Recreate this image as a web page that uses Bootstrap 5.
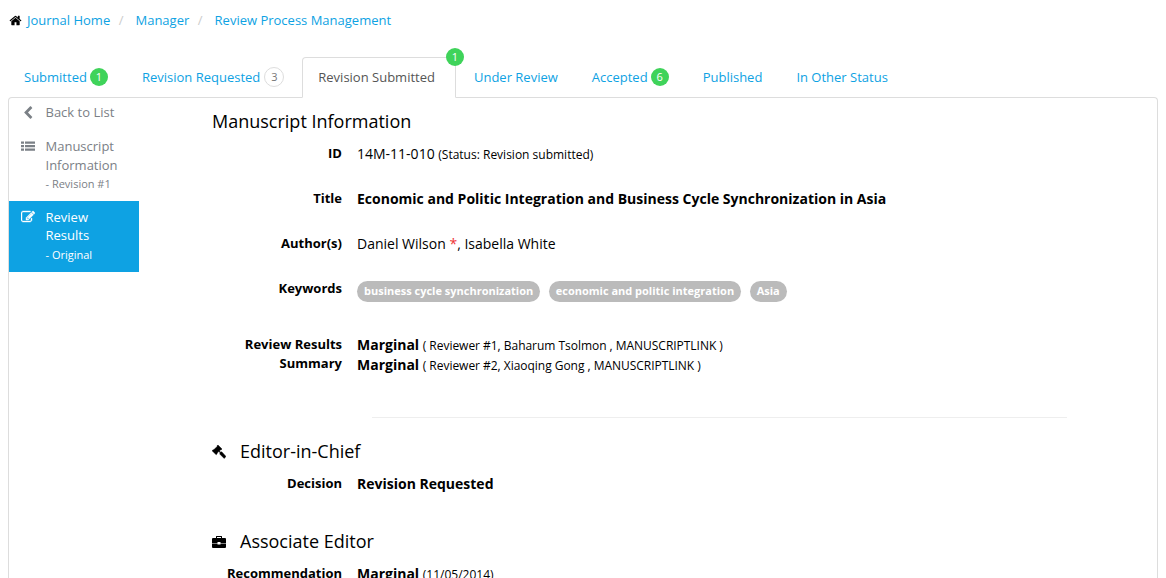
<!DOCTYPE html>
<html lang="en">
<head>
<meta charset="utf-8">
<meta name="viewport" content="width=device-width, initial-scale=1">
<title>Review Process Management</title>
<link href="https://cdn.jsdelivr.net/npm/bootstrap@5.3.0/dist/css/bootstrap.min.css" rel="stylesheet">
<style>
:root{--brand:#0ea2e3;--line:#ddd}
body{font-family:"Open Sans",sans-serif;font-size:14px;line-height:20px;color:#000;background:#fff}
a{color:var(--brand);text-decoration:none}
.fa-ico{width:14px;height:14px;fill:currentColor;flex:none;display:block}
.crumbs{font-size:13px;line-height:20px;padding:10px 0 0 1px;height:57px;margin:0}
.crumbs .fa-ico{width:13px;height:13px;margin:4px 5px 0 0}
.crumbs .breadcrumb-item+.breadcrumb-item{padding-left:8.5px}
.crumbs .breadcrumb-item+.breadcrumb-item::before{color:#ccc;padding-right:12px}
.status-tabs{font-size:13px;border:0;height:41px;position:relative;z-index:1;gap:2px;flex:none}
.status-tabs .nav-link{height:41px;padding:0 15px 2px;border-radius:4px 4px 0 0;border:1px solid transparent;margin:0;color:var(--brand);display:flex;align-items:center;white-space:pre}
.status-tabs .nav-link.active{color:#555;border-color:var(--line) var(--line) #fff;background:#fff;padding-right:20px}
.count{width:18px;height:18px;border-radius:50%;background:#3fd35a;color:#fff;font-size:11px;line-height:18px;text-align:center;margin-left:3px}
.count-plain{width:20px;height:20px;background:#fff;border:1px solid #ddd;color:#777;margin-left:4px}
.count-top{position:absolute;right:-8px;top:-9px;margin:0}
.panel-box{border:1px solid var(--line);border-bottom:0;border-radius:4px 4px 0 0;margin-top:-1px;min-height:0}
.side{width:130px;font-size:13px;color:#7b8086;line-height:18.5px;flex:none}
.side a{color:inherit;display:flex;padding:5px 12px 10px}
.side a .fa-ico{margin:3px 10.5px 0 0}
.side small{font-size:11px;display:block;line-height:19px}
.side a.tall{line-height:19px;padding-bottom:8px}
.side a.tall small{line-height:18px}
.side a.on{background:var(--brand);color:#fff;padding-top:7px;padding-bottom:8px}
.side a.on .fa-ico{margin-top:2px}
.main-col{padding:12px 90px 0 73px}
.sec-title{font-size:18px;line-height:22px;font-weight:400;margin:0 0 12px;display:flex;align-items:center}
.sec-title .fa-ico{margin:1px 14.5px 0 -.5px}
.field{display:flex;height:45px}
.field.gap-after{height:56px}
.field dt{width:130px;margin-right:15px;flex:none;text-align:right;font-size:13px;line-height:19px;font-weight:700}
.field dd{margin:0}
.field small{font-size:12px;line-height:1}
.keywords{gap:8.5px;padding-top:2px;align-self:flex-start}
.keyword{background:#bbb;border-radius:11px;font-size:11px;line-height:11px;padding:4px 7px 6px;font-weight:700}
.summary-row{height:82px}
.summary-row small{letter-spacing:-.03px}
.rule{border-top:1px solid #eee;margin:0 0 22px 160px}
.req{color:#e33}
</style>
</head>
<body>
<svg class="d-none">
<symbol id="home" viewBox="0 0 1792 1792"><path d="M1472 992v480q0 26-19 45t-45 19h-384v-384h-256v384h-384q-26 0-45-19t-19-45v-480q0-1 .5-3t.5-3l575-474 575 474q1 2 1 6zm223-69l-62 74q-8 9-21 11h-3q-13 0-21-7l-692-577-692 577q-12 8-24 7-13-2-21-11l-62-74q-8-10-7-23.5t11-21.5l719-599q32-26 76-26t76 26l244 204v-195q0-14 9-23t23-9h192q14 0 23 9t9 23v408l219 182q10 8 11 21.5t-7 23.5z"/></symbol>
<symbol id="back" viewBox="0 0 1792 1792"><path d="M1427 301l-531 531 531 531q19 19 19 45t-19 45l-166 166q-19 19-45 19t-45-19l-742-742q-19-19-19-45t19-45l742-742q19-19 45-19t45 19l166 166q19 19 19 45t-19 45z"/></symbol>
<symbol id="list" viewBox="0 0 14 14"><path d="M0 1.500h3v2.200H0zM0 5h3v2.200H0zM0 8.500h3v2.200H0zM4 1.500H14v2.200H4zM4 5H14v2.200H4zM4 8.500H14v2.200H4z"/></symbol>
<symbol id="edit" viewBox="0 0 1792 1792"><path stroke="currentColor" stroke-width="50" d="M888 1184l116-116-152-152-116 116v56h96v96h56zm440-720q-16-16-33 1l-350 350q-17 17-1 33t33-1l350-350q17-17 1-33zm80 594v190q0 119-84.500 203.500t-203.500 84.500h-832q-119 0-203.500-84.500t-84.500-203.500v-832q0-119 84.500-203.500t203.500-84.500h832q63 0 117 25 15 7 18 23 3 17-9 29l-49 49q-14 14-32 8-23-6-45-6h-832q-66 0-113 47t-47 113v832q0 66 47 113t113 47h832q66 0 113-47t47-113v-126q0-13 9-22l64-64q15-15 35-7t20 29zm-96-738l288 288-672 672h-288v-288zm444 132l-92 92-288-288 92-92q28-28 68-28t68 28l152 152q28 28 28 68t-28 68z"/></symbol>
<symbol id="gavel" viewBox="0 0 14 14"><path stroke="currentColor" stroke-width=".4" d="M6 0l4 4-1 1-.6-.2L7.500 6l1.300 1.200.9-.5L14 11.400 12.200 13.500 7.700 9l.4-1.200L6.800 6.600 5 8.200l.2.600-1 1L0 5.700l1-1 .7.100 3.500-3.400L5 .8z"/></symbol>
<symbol id="case" viewBox="0 0 14 14"><path fill-rule="evenodd" d="M4 3V1.500Q4 1 4.500 1h5q.5 0 .5.500V3h3q1 0 1 1v4H8.500V7h-3v1H0V4q0-1 1-1zm1 0h4V2H5zM0 8.500h5.500v.9h3v-.9H14V12q0 1-1 1H1q-1 0-1-1z"/></symbol>
</svg>
<div class="d-flex flex-column vh-100 overflow-hidden px-2">
  <nav><ol class="breadcrumb crumbs">
    <li class="breadcrumb-item d-flex"><svg class="fa-ico"><use href="#home"/></svg><a href="#">Journal Home</a></li>
    <li class="breadcrumb-item"><a href="#">Manager</a></li>
    <li class="breadcrumb-item"><a href="#">Review Process Management</a></li>
  </ol></nav>
  <ul class="nav nav-tabs status-tabs">
    <li class="nav-item"><a class="nav-link" href="#">Submitted<span class="count">1</span></a></li>
    <li class="nav-item"><a class="nav-link" href="#">Revision Requested<span class="count count-plain">3</span></a></li>
    <li class="nav-item position-relative"><a class="nav-link active" href="#">Revision Submitted<span class="count count-top">1</span></a></li>
    <li class="nav-item"><a class="nav-link" href="#">Under Review</a></li>
    <li class="nav-item"><a class="nav-link" href="#">Accepted<span class="count">6</span></a></li>
    <li class="nav-item"><a class="nav-link" href="#">Published</a></li>
    <li class="nav-item"><a class="nav-link" href="#">In Other Status</a></li>
  </ul>
  <div class="panel-box d-flex flex-grow-1 overflow-hidden">
    <aside class="side">
      <a href="#"><svg class="fa-ico"><use href="#back"/></svg><span>Back to List</span></a>
      <a class="tall" href="#"><svg class="fa-ico"><use href="#list"/></svg><span>Manuscript Information<small>- Revision #1</small></span></a>
      <a class="on" href="#"><svg class="fa-ico"><use href="#edit"/></svg><span>Review Results<small>- Original</small></span></a>
    </aside>
    <main class="main-col flex-grow-1">
      <h1 class="sec-title">Manuscript Information</h1>
      <dl class="m-0">
        <div class="field"><dt>ID</dt><dd>14M-11-010 <small>(Status: Revision submitted)</small></dd></div>
        <div class="field"><dt>Title</dt><dd class="fw-bold">Economic and Politic Integration and Business Cycle Synchronization in Asia</dd></div>
        <div class="field"><dt>Author(s)</dt><dd>Daniel Wilson <span class="req">*</span>, Isabella White</dd></div>
        <div class="field gap-after"><dt>Keywords</dt><dd class="d-flex keywords"><span class="badge keyword">business cycle synchronization</span><span class="badge keyword">economic and politic integration</span><span class="badge keyword">Asia</span></dd></div>
        <div class="field summary-row"><dt>Review Results Summary</dt><dd><div><b>Marginal</b> <small>( Reviewer #1, Baharum Tsolmon , MANUSCRIPTLINK )</small></div><div><b>Marginal</b> <small>( Reviewer #2, Xiaoqing Gong , MANUSCRIPTLINK )</small></div></dd></div>
      </dl>
      <div class="rule"></div>
      <h2 class="sec-title"><svg class="fa-ico"><use href="#gavel"/></svg>Editor-in-Chief</h2>
      <dl class="m-0"><div class="field gap-after"><dt>Decision</dt><dd class="fw-bold">Revision Requested</dd></div></dl>
      <h2 class="sec-title"><svg class="fa-ico"><use href="#case"/></svg>Associate Editor</h2>
      <dl class="m-0"><div class="field"><dt>Recommendation</dt><dd><b>Marginal</b> <small>(11/05/2014)</small></dd></div></dl>
    </main>
  </div>
</div>
<script src="https://cdn.jsdelivr.net/npm/bootstrap@5.3.0/dist/js/bootstrap.bundle.min.js"></script>
</body>
</html>
